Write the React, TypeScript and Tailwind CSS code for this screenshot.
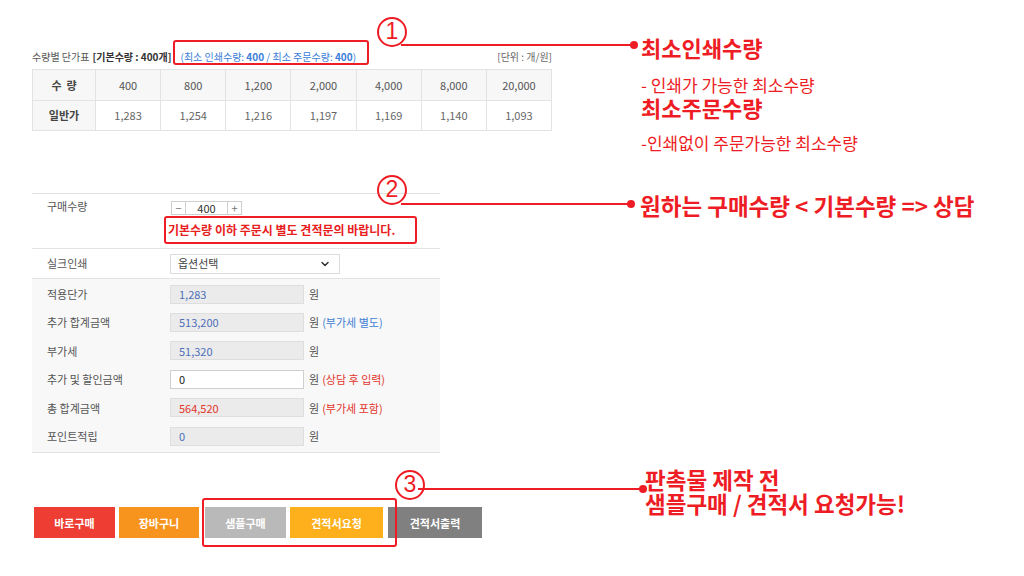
import { ChevronDown } from "lucide-react";

const prices = [
  { qty: "400", price: "1,283" },
  { qty: "800", price: "1,254" },
  { qty: "1,200", price: "1,216" },
  { qty: "2,000", price: "1,197" },
  { qty: "4,000", price: "1,169" },
  { qty: "8,000", price: "1,140" },
  { qty: "20,000", price: "1,093" },
];

interface AmountRow {
  label: string;
  value: string;
  editable?: boolean;
  valueClass?: string;
  note?: string;
  noteClass?: string;
}

const amounts: AmountRow[] = [
  { label: "적용단가", value: "1,283" },
  { label: "추가 합계금액", value: "513,200", note: "(부가세 별도)", noteClass: "text-[#3f7fd4]" },
  { label: "부가세", value: "51,320" },
  { label: "추가 및 할인금액", value: "0", editable: true, note: "(상담 후 입력)", noteClass: "text-[#e2352b]" },
  { label: "총 합계금액", value: "564,520", valueClass: "text-[#e2352b]", note: "(부가세 포함)", noteClass: "text-[#e2352b]" },
  { label: "포인트적립", value: "0" },
];

function Circled({ n, className }: { n: string; className: string }) {
  return (
    <div
      className={`absolute flex h-[30px] w-[30px] items-center justify-center rounded-full border-2 border-[#ee1c24] pb-[1px] font-['Liberation_Sans',sans-serif] text-[23px] leading-none text-[#ee1c24] ${className}`}
    >
      {n}
    </div>
  );
}

export default function App() {
  return (
    <div className="relative h-[576px] w-[1024px] overflow-hidden bg-white font-['Noto_Sans_CJK_KR','Liberation_Sans',sans-serif] text-[11px] text-[#555]">
      <div className="ml-[32px] w-[520px] pt-[48px]">
        {/* price table caption */}
        <div className="flex h-[18px] items-center justify-between text-[10px] leading-none">
          <div className="flex items-center">
            <span className="text-[#555]">수량별 단가표</span>
            <span className="ml-[3px] font-bold text-[#333]">[기본수량 : 400개]</span>
            <span className="ml-[9px] text-[#3b7dd8]">
              (최소 인쇄수량: <b>400</b> / 최소 주문수량: <b>400</b>)
            </span>
          </div>
          <span className="text-[#666]">[단위 : 개/원]</span>
        </div>

        <table className="mt-[3px] w-full table-fixed border-collapse text-center">
          <colgroup>
            <col className="w-[63px]" />
          </colgroup>
          <tbody>
            <tr className="h-[31px] bg-[#f7f7f7]">
              <td className="border border-[#e3e3e3] font-bold text-[#444]">수 &nbsp;량</td>
              {prices.map((p) => (
                <td key={p.qty} className="border border-[#e3e3e3] text-[#555]">
                  {p.qty}
                </td>
              ))}
            </tr>
            <tr className="h-[30px]">
              <td className="border border-[#e3e3e3] bg-[#f7f7f7] font-bold text-[#444]">일반가</td>
              {prices.map((p) => (
                <td key={p.qty} className="border border-[#e3e3e3] text-[#666]">
                  {p.price}
                </td>
              ))}
            </tr>
          </tbody>
        </table>

        {/* order form */}
        <div className="mt-[62px] w-[408px] border-t border-[#e3e3e3]">
          <div className="flex h-[55px] border-b border-[#e3e3e3]">
            <div className="w-[138px] pl-[15px] pt-[5px] leading-[14px]">구매수량</div>
            <div className="pt-[7px]">
              <div className="ml-[1px] flex h-[14px] w-fit items-center border border-[#cfcfcf] leading-none text-[#333]">
                <span className="w-[13px] text-center text-[#777]">−</span>
                <span className="flex h-full w-[43px] items-center justify-center border-x border-[#cfcfcf]">400</span>
                <span className="w-[13px] text-center text-[#777]">+</span>
              </div>
              <div className="ml-[-6px] mt-[1px] flex h-[28px] w-[253px] items-center rounded-[3px] border-2 border-[#ee1c24] pl-[2px] text-[12px] font-bold text-[#e8201d]">
                기본수량 이하 주문시 별도 견적문의 바랍니다.
              </div>
            </div>
          </div>

          <div className="flex h-[30px] items-center border-b border-[#e3e3e3]">
            <div className="w-[138px] pl-[15px]">실크인쇄</div>
            <div className="flex h-[20px] w-[170px] items-center justify-between border border-[#dcdcdc] bg-white pl-[7px] pr-[8px] text-[#444]">
              <span>옵션선택</span>
              <ChevronDown size={12} strokeWidth={3} className="text-[#333]" />
            </div>
          </div>

          <div className="border-b border-[#e3e3e3] bg-[#f8f8f8] pb-[2px] pt-[1px]">
            {amounts.map((row) => (
              <div key={row.label} className="flex h-[28.4px] items-center">
                <div className="w-[138px] pl-[15px]">{row.label}</div>
                <div
                  className={`flex h-[19px] w-[134px] items-center pl-[8px] ${
                    row.editable
                      ? "border border-[#cfcfcf] bg-white text-[#222]"
                      : `border border-[#dedede] bg-[#ebebeb] ${row.valueClass ?? "text-[#4d6fb8]"}`
                  }`}
                >
                  {row.value}
                </div>
                <span className="ml-[5px] text-[#555]">원</span>
                {row.note && <span className={`ml-[3px] ${row.noteClass}`}>{row.note}</span>}
              </div>
            ))}
          </div>
        </div>

        {/* buttons */}
        <div className="ml-[2px] mt-[54px] flex h-[31px] text-[11px] font-bold text-white">
          <div className="flex w-[81px] items-center justify-center bg-[#ee3d33]">바로구매</div>
          <div className="ml-[4px] flex w-[80px] items-center justify-center bg-[#f7941e]">장바구니</div>
          <div className="ml-[6px] flex w-[81px] items-center justify-center bg-[#b9b9b9]">샘플구매</div>
          <div className="ml-[4px] flex w-[93px] items-center justify-center bg-[#fdb01b]">견적서요청</div>
          <div className="ml-[5px] flex w-[94px] items-center justify-center bg-[#808080]">견적서출력</div>
        </div>
      </div>

      {/* annotation boxes */}
      <div className="absolute left-[173px] top-[40px] h-[25px] w-[196px] rounded-[3px] border-2 border-[#ee1c24]" />
      <div className="absolute left-[202px] top-[498px] h-[49px] w-[195px] rounded-[3px] border-2 border-[#ee1c24]" />

      {/* annotation 1 */}
      <Circled n="1" className="left-[377px] top-[17px]" />
      <div className="absolute left-[401px] top-[44px] h-[2px] w-[232px] bg-[#ee1c24]" />
      <div className="absolute left-[630px] top-[41px] h-[8px] w-[8px] rounded-full bg-[#ee1c24]" />
      <div className="absolute left-[641px] top-[34px] text-[#ee1c24]">
        <div className="text-[22px] font-bold leading-[26px]">최소인쇄수량</div>
        <div className="mt-[15px] text-[17px] leading-[20px]">- 인쇄가 가능한 최소수량</div>
        <div className="mt-[0px] text-[22px] font-bold leading-[24px]">최소주문수량</div>
        <div className="mt-[14px] text-[17px] leading-[20px]">-인쇄없이 주문가능한 최소수량</div>
      </div>

      {/* annotation 2 */}
      <Circled n="2" className="left-[377px] top-[175px]" />
      <div className="absolute left-[401px] top-[203px] h-[2px] w-[229px] bg-[#ee1c24]" />
      <div className="absolute left-[627px] top-[200px] h-[8px] w-[8px] rounded-full bg-[#ee1c24]" />
      <div className="absolute left-[640px] top-[192px] text-[22.5px] font-bold leading-[26px] text-[#ee1c24]">
        원하는 구매수량 &lt; 기본수량 =&gt; 상담
      </div>

      {/* annotation 3 */}
      <Circled n="3" className="left-[395px] top-[470px]" />
      <div className="absolute left-[418px] top-[488px] h-[2px] w-[224px] bg-[#ee1c24]" />
      <div className="absolute left-[639px] top-[485px] h-[8px] w-[8px] rounded-full bg-[#ee1c24]" />
      <div className="absolute left-[645px] top-[467px] text-[22.5px] font-bold leading-[24px] text-[#ee1c24]">
        <div>판촉물 제작 전</div>
        <div>샘플구매 / 견적서 요청가능!</div>
      </div>
    </div>
  );
}
